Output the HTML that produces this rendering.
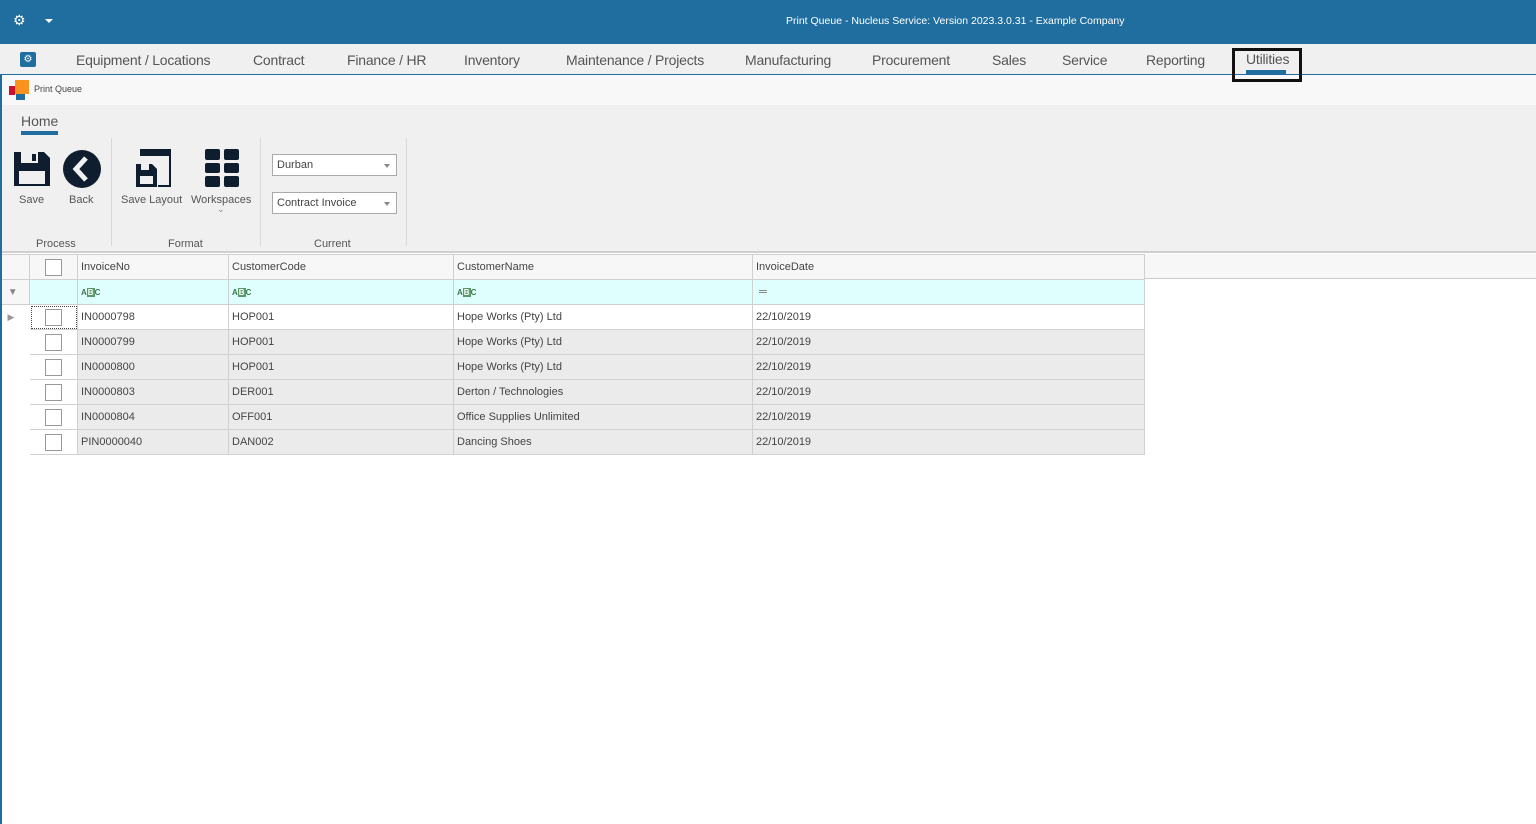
<!DOCTYPE html>
<html><head><meta charset="utf-8"><style>
*{margin:0;padding:0;box-sizing:border-box}
body{width:1536px;height:824px;overflow:hidden;background:#fff;font-family:"Liberation Sans",sans-serif;position:relative;color:#333}
.abs{position:absolute}
#title{left:0;top:0;width:1536px;height:44px;background:#206ea0}
#tabs{left:0;top:44px;width:1536px;height:31px;background:#f0f0f0;border-bottom:1px solid #206ea0;z-index:5}
.tab{position:absolute;top:8px;font-size:14px;color:#555;letter-spacing:-0.2px}
#pq{left:1px;top:75px;width:1535px;height:30px;background:#f8f8f8}
#ribbon{left:1px;top:105px;width:1535px;height:148px;background:#f0f0f0;border-bottom:2px solid #cfcfcf}
.lbl{position:absolute;font-size:11px;color:#555}
.sep{position:absolute;top:138px;width:1px;height:108px;background:#d8d8d8}
.dd{position:absolute;left:271px;width:125px;height:22px;border:1px solid #aaa;background:#fff;font-size:11px;padding:4px 4px;color:#444}
.dd:after{content:"";position:absolute;right:6px;top:9px;border:3px solid transparent;border-top:4px solid #888}
table{position:absolute;left:1px;top:254px;border-collapse:collapse;font-size:11px;color:#444}
td{height:25px;border:1px solid #d0d0d0;padding:0 3px;white-space:nowrap}
.cb{display:inline-block;width:17px;height:17px;border:1px solid #999;background:#fff;vertical-align:middle}
.abc{font-size:8px;color:#3a7a4a;font-weight:bold;letter-spacing:0}
.abc b{background:#5a9a6a;color:#fff;padding:0 1px}
</style></head><body>
<div class="abs" id="title">
 <div class="abs" style="left:13px;top:12px;width:18px;height:18px;color:#fff;font-size:14px">⚙</div>
 <div class="abs" style="left:45px;top:19px;border:4px solid transparent;border-top:4px solid #fff"></div>
 <div class="abs" style="left:786px;top:15px;font-size:10.5px;color:#fff">Print Queue - Nucleus Service: Version 2023.3.0.31 - Example Company</div>
</div>
<div class="abs" id="tabs">
 <div class="abs" style="left:20px;top:8px;width:16px;height:15px;background:#206ea0;border-radius:2px;color:#fff;font-size:10px;text-align:center;line-height:15px">⚙</div>
 <span class="tab" style="left:76px">Equipment / Locations</span>
 <span class="tab" style="left:253px">Contract</span>
 <span class="tab" style="left:347px">Finance / HR</span>
 <span class="tab" style="left:464px">Inventory</span>
 <span class="tab" style="left:566px">Maintenance / Projects</span>
 <span class="tab" style="left:745px">Manufacturing</span>
 <span class="tab" style="left:872px">Procurement</span>
 <span class="tab" style="left:992px">Sales</span>
 <span class="tab" style="left:1062px">Service</span>
 <span class="tab" style="left:1146px">Reporting</span>
 <span class="tab" style="left:1246px;top:7px">Utilities</span>
 <div class="abs" style="left:1246px;top:26px;width:40px;height:4px;background:#206ea0"></div>
 <div class="abs" style="left:1232px;top:4px;width:70px;height:34px;border:3px solid #111"></div>
</div>
<div class="abs" style="left:0;top:75px;width:2px;height:749px;background:#206ea0;z-index:10"></div>
<div class="abs" id="pq">
 <div class="abs" style="left:8px;top:11px;width:6px;height:9px;background:#d0102a"></div>
 <div class="abs" style="left:14px;top:5px;width:14px;height:14px;background:#f7931e"></div>
 <div class="abs" style="left:15px;top:19px;width:9px;height:6px;background:#206ea0"></div>
 <div class="abs" style="left:33px;top:9px;font-size:9px;color:#444">Print Queue</div>
</div>
<div class="abs" id="ribbon">
 <div class="abs" style="left:20px;top:8px;font-size:14px;color:#555">Home</div>
 <div class="abs" style="left:20px;top:26px;width:37px;height:4px;background:#206ea0"></div>
 <svg class="abs" style="left:11px;top:44px" width="40" height="40" viewBox="0 0 40 40"><path d="M2 3h30l6 6v28H2z" fill="#0f1e2e"/><rect x="9" y="3" width="17" height="11" fill="#f0f0f0"/><rect x="20" y="5" width="4" height="7" fill="#0f1e2e"/><rect x="7" y="22" width="26" height="13" fill="#f0f0f0"/></svg>
 <svg class="abs" style="left:61px;top:44px" width="40" height="40" viewBox="0 0 40 40"><circle cx="20" cy="20" r="19" fill="#0f1e2e"/><path d="M24 9L14 20l10 11" stroke="#f0f0f0" stroke-width="5" fill="none"/></svg>
 <div class="lbl" style="left:18px;top:89px">Save</div>
 <div class="lbl" style="left:68px;top:89px">Back</div>
 <svg class="abs" style="left:133px;top:43px" width="40" height="42" viewBox="0 0 40 42"><path d="M6 2h30v36H24" stroke="#0f1e2e" stroke-width="2" fill="none" /><rect x="6" y="2" width="30" height="6" fill="#0f1e2e"/><path d="M2 16h16l5 5v18H2z" fill="#0f1e2e"/><rect x="7" y="16" width="8" height="6" fill="#f0f0f0"/><rect x="6" y="28" width="13" height="8" fill="#f0f0f0"/></svg>
 <svg class="abs" style="left:203px;top:43px" width="36" height="40" viewBox="0 0 36 40"><g fill="#0f1e2e"><rect x="1" y="1" width="15" height="11" rx="2"/><rect x="20" y="1" width="15" height="11" rx="2"/><rect x="1" y="15" width="15" height="10" rx="2"/><rect x="20" y="15" width="15" height="10" rx="2"/><rect x="1" y="28" width="15" height="11" rx="2"/><rect x="20" y="28" width="15" height="11" rx="2"/></g></svg>
 <div class="lbl" style="left:120px;top:89px">Save Layout</div>
 <div class="lbl" style="left:190px;top:89px">Workspaces</div>
 <div class="lbl" style="left:216px;top:99px;font-size:9px;color:#888">⌄</div>
 <div class="dd" style="top:49px">Durban</div>
 <div class="dd" style="top:87px">Contract Invoice</div>
 <div class="lbl" style="left:35px;top:133px">Process</div>
 <div class="lbl" style="left:167px;top:133px">Format</div>
 <div class="lbl" style="left:313px;top:133px">Current</div>
</div>
<div class="sep" style="left:111px"></div><div class="sep" style="left:260px"></div><div class="sep" style="left:406px"></div>
<div class="abs" style="left:2px;top:254px;width:1534px;height:25px;background:#f7f7f7;border-bottom:1px solid #ccc"></div>
<table>
<tr style="background:#f7f7f7"><td style="width:28px"></td><td style="width:48px;text-align:center"><span class="cb"></span></td><td style="width:151px">InvoiceNo</td><td style="width:225px">CustomerCode</td><td style="width:299px">CustomerName</td><td style="width:392px">InvoiceDate</td></tr>
<tr style="background:#dfffff"><td style="background:#f7f7f7;color:#888;font-size:10px">&nbsp;▼</td><td></td><td><span class="abc">A<b>B</b>C</span></td><td><span class="abc">A<b>B</b>C</span></td><td><span class="abc">A<b>B</b>C</span></td><td style="font-weight:bold;color:#666">&nbsp;═</td></tr>
<tr style="background:#fff"><td style="background:#fff;color:#999;font-size:9px;border-color:#fff">&nbsp;▶</td><td style="text-align:center;outline:1px dotted #444;outline-offset:-2px"><span class="cb"></span></td><td>IN0000798</td><td>HOP001</td><td>Hope Works (Pty) Ltd</td><td>22/10/2019</td></tr>
<tr style="background:#ebebeb"><td style="background:#fff;border-color:#fff"></td><td style="background:#fff;text-align:center"><span class="cb"></span></td><td>IN0000799</td><td>HOP001</td><td>Hope Works (Pty) Ltd</td><td>22/10/2019</td></tr>
<tr style="background:#ebebeb"><td style="background:#fff;border-color:#fff"></td><td style="background:#fff;text-align:center"><span class="cb"></span></td><td>IN0000800</td><td>HOP001</td><td>Hope Works (Pty) Ltd</td><td>22/10/2019</td></tr>
<tr style="background:#ebebeb"><td style="background:#fff;border-color:#fff"></td><td style="background:#fff;text-align:center"><span class="cb"></span></td><td>IN0000803</td><td>DER001</td><td>Derton / Technologies</td><td>22/10/2019</td></tr>
<tr style="background:#ebebeb"><td style="background:#fff;border-color:#fff"></td><td style="background:#fff;text-align:center"><span class="cb"></span></td><td>IN0000804</td><td>OFF001</td><td>Office Supplies Unlimited</td><td>22/10/2019</td></tr>
<tr style="background:#ebebeb"><td style="background:#fff;border-color:#fff"></td><td style="background:#fff;text-align:center"><span class="cb"></span></td><td>PIN0000040</td><td>DAN002</td><td>Dancing Shoes</td><td>22/10/2019</td></tr>
</table>
</body></html>
